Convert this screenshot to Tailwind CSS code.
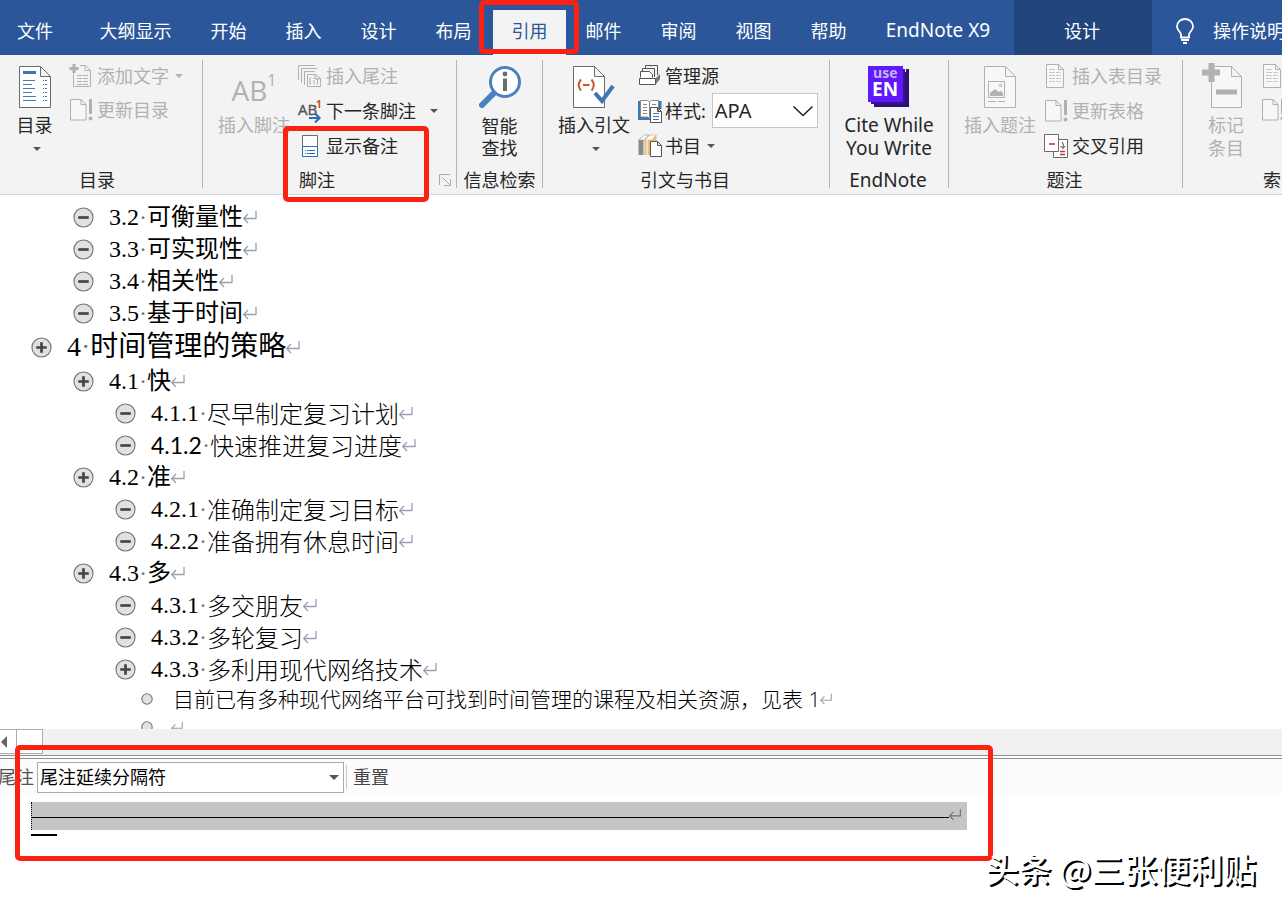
<!DOCTYPE html>
<html lang="zh-CN">
<head>
<meta charset="utf-8">
<title>引用 - 大纲显示</title>
<script src="https://cdn.jsdelivr.net/npm/@tailwindcss/browser@4"></script>
</head>
<body class="relative flex h-screen flex-col overflow-hidden bg-white font-['Noto_Sans','Noto_Sans_CJK_SC',sans-serif] text-lg text-[#262626]">

<svg class="hidden">
  <symbol id="ret" viewBox="0 0 16 14"><path d="M13 1v7.500H1M5 4L.7 8.500L5 13" fill="none" stroke="currentColor" stroke-width="1.300"/></symbol>
  <symbol id="minus" viewBox="0 0 22 22"><circle cx="11" cy="11" r="10" fill="#e1e1e1" stroke="#777" stroke-width="1.200"/><path d="M5.500 11h11" stroke="#444" stroke-width="2.800"/></symbol>
  <symbol id="plus" viewBox="0 0 22 22"><circle cx="11" cy="11" r="10" fill="#e1e1e1" stroke="#777" stroke-width="1.200"/><path d="M5.500 11h11M11 5.500v11" stroke="#444" stroke-width="2.800"/></symbol>
  <symbol id="dot" viewBox="0 0 12 12"><circle cx="6" cy="6" r="5.200" fill="#e1e1e1" stroke="#777" stroke-width="1.100"/></symbol>
  <symbol id="down" viewBox="0 0 8 4"><path d="M0 0h8L4 4z" fill="currentColor"/></symbol>
  <symbol id="update" viewBox="0 0 24 24"><path d="M1.500 1.500h10.500l5 5v15.500H1.500zM12 1.500v5h5" fill="#f7f7f7" stroke="#b1b1b1"/><path d="M21.500 1v15" stroke="#b1b1b1" stroke-width="3"/><circle cx="21.500" cy="20.500" r="2" fill="#b1b1b1"/></symbol>
  <symbol id="listpage" viewBox="0 0 24 24"><path d="M2.500.5h12l5 5v18h-17zM14.500.5v5h5" fill="#f7f7f7" stroke="#b1b1b1"/><path d="M5.500 8.500h5m2 0h4M5.500 11.500h5m2 0h4M5.500 14.500h5m2 0h4M5.500 17.500h5m2 0h4M5.500 5.500h6" stroke="#b1b1b1" stroke-dasharray="2 1"/></symbol>
</svg>

<header class="flex h-[55px] shrink-0 items-end whitespace-nowrap bg-[#2b579a] text-white">
  <nav class="flex h-[45px] shrink-0 items-stretch">
    <button class="mr-[10px] w-[70px] pb-1">文件</button>
    <button class="w-[111px] pb-1">大纲显示</button>
    <button class="w-[75px] pb-1">开始</button>
    <button class="w-[75px] pb-1">插入</button>
    <button class="w-[75px] pb-1">设计</button>
    <button class="w-[75px] pb-1">布局</button>
    <button class="ml-[2px] w-[73px] bg-[#f3f3f3] pb-1 text-[#2b579a]">引用</button>
    <button class="w-[75px] pb-1">邮件</button>
    <button class="w-[75px] pb-1">审阅</button>
    <button class="w-[75px] pb-1">视图</button>
    <button class="w-[75px] pb-1">帮助</button>
    <button class="w-[148px] pb-1 pr-1 text-[19px]">EndNote X9</button>
  </nav>
  <button class="h-full w-[138px] shrink-0 bg-[#22467b] pr-[2px] pt-[6px]">设计</button>
  <button class="flex h-[45px] shrink-0 items-center pb-1 pl-[23px]">
    <svg class="mr-[18px] h-[26px] w-5" viewBox="0 0 20 26" fill="none" stroke="#fff" stroke-width="1.800"><path d="M6 19.500v-3C6 14 2 12.500 2 8.500a8 7.500 0 0 1 16 0c0 4-4 5.500-4 8v3zM6 22h8M8 25h4"/></svg>操作说明搜索
  </button>
</header>

<section class="flex h-[140px] shrink-0 overflow-hidden whitespace-nowrap border-b border-[#d2d2d2] bg-[#f3f3f3] pt-[3px]">
  <!-- 目录 -->
  <div class="flex w-[202px] shrink-0 flex-col">
    <div class="flex h-[110px]">
      <button class="flex w-[69px] flex-col items-center pt-2">
        <svg class="h-[42px] w-8" viewBox="0 0 32 42"><path d="M.5.5h21l10 10v31H.5zM21.500.5v10h10" fill="#fff" stroke="#6b6b6b"/><path d="M4 6.500h13" stroke="#3c78a8" stroke-width="3"/><path d="M4 14.500h12M4 18.500h9M4 22.500h12M4 26.500h9M4 30.500h13M4 34.500h13" stroke="#4a7ab8"/><path d="M24 14.500h4M24 18.500h4M24 22.500h4M24 26.500h4M24 30.500h4M24 34.500h4" stroke="#4a7ab8" stroke-dasharray="1 1 2"/></svg>
        <span class="h-[22px] pt-[6px] leading-[22px]">目录</span>
        <svg class="mt-[17px] ml-1 h-1 w-2 text-[#555]"><use href="#down"/></svg>
      </button>
      <div class="text-[#b1b1b1]">
        <button class="flex h-[35px] items-center" disabled><svg class="mr-1 size-6" viewBox="0 0 24 24"><path d="M4.500 9.500v13h17v-16l-5-5H11M16 1.500v5h5" fill="none" stroke="#b1b1b1"/><path d="M5 0v9M.5 4.500h9" stroke="#b1b1b1" stroke-width="3"/><path d="M8 11.500h5m1 0h5M8 14.500h5m1 0h5M8 17.500h5m1 0h5M8 20.500h5m1 0h5" stroke="#b1b1b1"/></svg>添加文字<svg class="ml-[6px] h-1 w-2"><use href="#down"/></svg></button>
        <button class="flex h-[34px] items-center" disabled><svg class="mr-1 size-6"><use href="#update"/></svg>更新目录</button>
      </div>
    </div>
    <div class="pr-2 text-center leading-6">目录</div>
  </div>
  <div class="mt-[2px] h-[128px] w-px shrink-0 bg-[#b5b5b5]"></div>

  <!-- 脚注 -->
  <div class="flex w-[253px] shrink-0 flex-col">
    <div class="flex h-[110px]">
      <button class="flex w-[95px] flex-col items-center pl-[7px] pt-2 text-[#b1b1b1]" disabled>
        <span class="flex h-[42px] items-start pt-2 font-['Open_Sans'] text-[28px] font-medium leading-8"><span>AB</span><sup class="top-0 text-base leading-3">1</sup></span>
        <span class="h-[22px] pt-[6px] leading-[22px]">插入脚注</span>
      </button>
      <div>
        <button class="flex h-[35px] items-center text-[#b1b1b1]" disabled><svg class="mr-1 size-6" viewBox="0 0 24 24" fill="none" stroke="#b1b1b1"><path d="M.5 16V1.500H17M3.500 19V4.500H19M6.500 21V7.500h10M9.500 22.500v-12h8l5 4v8zM17 10v5h5M13 14h-1v6h1M16 14v1m0 1v4M18.500 14h1v6h-1"/></svg>插入尾注</button>
        <button class="flex h-[35px] items-center"><svg class="mr-1 size-6 overflow-visible" viewBox="0 0 24 24"><text x="0" y="16" font-family="Open Sans" font-size="15" fill="#555" stroke="#555" stroke-width=".4">AB</text><text x="18" y="9" font-family="Open Sans" font-size="10" font-weight="700" fill="#d24726">1</text><path d="M11 19h10M17 14.500l4.500 4.500l-4.500 4.500" fill="none" stroke="#2f6eb5" stroke-width="2.200"/></svg>下一条脚注<svg class="ml-[14px] h-1 w-2 text-[#555]"><use href="#down"/></svg></button>
        <button class="flex h-[35px] items-center"><svg class="mr-1 size-6" viewBox="0 0 24 24"><path d="M4.500 1.500h15v21h-15z" fill="#fff" stroke="#6b6b6b"/><path d="M4.500 12.500h15v10h-15z" fill="#fff" stroke="#2f6eb5"/><path d="M7 16.500h1m1 0h8M7 19.500h1m1 0h8" stroke="#2f6eb5"/></svg>显示备注</button>
      </div>
    </div>
    <div class="flex items-center justify-between pl-24 pr-[5px] leading-6">脚注
      <button aria-label="脚注选项"><svg class="h-3 w-3" viewBox="0 0 12 12" fill="none" stroke="#aaa"><path d="M.5 11V.5H11M3.500 3.500l7 7M11.500 5v6.500H5"/></svg></button></div>
  </div>
  <div class="mt-[2px] h-[128px] w-px shrink-0 bg-[#b5b5b5]"></div>

  <!-- 信息检索 -->
  <div class="flex w-[85px] shrink-0 flex-col">
    <button class="flex h-[110px] flex-col items-center pt-2">
      <svg class="h-[42px] w-[42px]" viewBox="0 0 42 42"><path d="M16 26L3 39" stroke="#4a80bd" stroke-width="6" stroke-linecap="round"/><circle cx="26" cy="16" r="14.500" fill="#fff" stroke="#4a80bd" stroke-width="3"/><circle cx="26" cy="8" r="2.400" fill="#6d6d6d"/><path d="M26 12.500V25" stroke="#6d6d6d" stroke-width="4"/></svg>
      <span class="pt-[7px] leading-[22px]">智能<br>查找</span>
    </button>
    <div class="text-center leading-6">信息检索</div>
  </div>
  <div class="mt-[2px] h-[128px] w-px shrink-0 bg-[#b5b5b5]"></div>

  <!-- 引文与书目 -->
  <div class="flex w-[286px] shrink-0 flex-col">
    <div class="flex h-[110px]">
      <button class="flex w-[95px] flex-col items-center pl-[7px] pt-2">
        <svg class="h-[42px] w-[42px]" viewBox="0 0 42 42"><path d="M.5.5h21l10 10v31H.5zM21.500.5v10h10" fill="#fff" stroke="#6b6b6b"/><path d="M8 13.500q-4.500 5.500 0 11M18.500 13.500q4.500 5.500 0 11M10 19h6.500" fill="none" stroke="#cf5432" stroke-width="2"/><path d="M22 27l7 8L40 20" fill="none" stroke="#3f74b5" stroke-width="4"/></svg>
        <span class="h-[22px] pt-[6px] leading-[22px]">插入引文</span>
        <svg class="mt-[17px] ml-1 h-1 w-2 text-[#555]"><use href="#down"/></svg>
      </button>
      <div>
        <button class="flex h-[35px] items-center"><svg class="mr-[3px] size-6" viewBox="0 0 24 24"><path d="M7.500 5V1.500h12V11M4.500 8V4.500h12V13" fill="none" stroke="#555"/><path d="M2.500 13.500v-6h9l3 3v3" fill="#fff" stroke="#555"/><path d="M1.500 14.500h16v6h-16z" fill="#fff" stroke="#555"/><path d="M18 14l4-4v5l-4 5z" fill="#777"/></svg>管理源</button>
        <div class="flex h-[35px] items-center"><svg class="mr-[3px] size-6" viewBox="0 0 24 24"><path d="M0 2v18h2.500V2z" fill="#3f74b5"/><path d="M0 18h12v3H0z" fill="#3f74b5"/><path d="M20 2h3.500v8H20z" fill="#3f74b5"/><path d="M2.500 1.500h7l2 1.500l2-1.500h7V18h-7l-2 1l-2-1h-7z" fill="#fff" stroke="#888"/><path d="M5 5.500h4M5 8.500h4M5 11.500h4M5 14.500h4M11.500 3v15M14 5.500h4" stroke="#888"/><path d="M12.500 8.500h7l4 4v11h-11zM19.500 8.500v4h4" fill="#fff" stroke="#555"/><path d="M15 14.500h6M15 17.500h6M15 20.500h6" stroke="#3f74b5"/></svg><label for="style">样式:</label>
          <div class="relative ml-[6px]"><select id="style" class="block h-[35px] w-[106px] appearance-none rounded-none border border-[#c6c6c6] bg-white pl-[2px] text-xl"><option>APA</option></select><svg class="pointer-events-none absolute right-1 top-3 h-3 w-[22px]" viewBox="0 0 22 12"><path d="M1.500 1.500l9.500 9l9.500-9" fill="none" stroke="#222" stroke-width="1.600"/></svg></div></div>
        <button class="flex h-[35px] items-center"><svg class="mr-[3px] size-6" viewBox="0 0 24 24"><path d="M.5 6h5v15h-5z" fill="#8a8a8a"/><path d="M6.500 6h7v15h-7z" fill="#e5bd7c"/><path d="M.5 6l6-5H11L5.500 6z" fill="#fff" stroke="#999" stroke-width=".7"/><path d="M6.500 6l6-5h6l-5 5z" fill="#fff" stroke="#d8b070" stroke-width=".7"/><path d="M13.500 6l5-5v6h-5z" fill="#e5bd7c"/><path d="M9 6v15" stroke="#fff"/><path d="M12.500 7.500h7l4 4v11h-11zM19.500 7.500v4h4" fill="#fff" stroke="#555"/></svg>书目<svg class="ml-[6px] h-1 w-2 text-[#555]"><use href="#down"/></svg></button>
      </div>
    </div>
    <div class="pr-[2px] text-center leading-6">引文与书目</div>
  </div>
  <div class="mt-[2px] h-[128px] w-px shrink-0 bg-[#b5b5b5]"></div>

  <!-- EndNote -->
  <div class="flex w-[118px] shrink-0 flex-col text-[19px]">
    <button class="flex h-[110px] flex-col items-center pt-2">
      <svg class="h-[42px] w-[42px]" viewBox="0 0 42 42"><path d="M6 38V6h32v-3h3v38H6z" fill="#2d1272"/><path d="M3 3h34v35H3z" fill="#36138f"/><path d="M0 0h35v36H0z" fill="#6019fa"/><text x="5" y="12" font-family="Open Sans" font-size="14" font-weight="700" fill="#c9b3fb">use</text><text x="4" y="30" font-family="Open Sans" font-size="19" font-weight="700" fill="#fff">EN</text></svg>
      <span class="pt-[6px] leading-[23px]">Cite While<br>You Write</span>
    </button>
    <div class="pr-[2px] text-center leading-6">EndNote</div>
  </div>
  <div class="mt-[2px] h-[128px] w-px shrink-0 bg-[#b5b5b5]"></div>

  <!-- 题注 -->
  <div class="flex w-[233px] shrink-0 flex-col">
    <div class="flex h-[110px]">
      <button class="flex w-[95px] flex-col items-center pl-[7px] pt-2 text-[#b1b1b1]" disabled>
        <svg class="h-[42px] w-8" viewBox="0 0 32 42"><path d="M.5.5h21l10 10v31H.5zM21.500.5v10h10" fill="#f7f7f7" stroke="#b1b1b1"/><path d="M4.500 15.500h16v16h-16z" fill="none" stroke="#b1b1b1"/><path d="M6 30v-3l5-4l4 3l2-1l2 2v3z" fill="#b1b1b1"/><circle cx="16.500" cy="19.500" r="2" fill="#d0d0d0"/><path d="M4 35.500h8m2 0h7" stroke="#b1b1b1"/></svg>
        <span class="h-[22px] pt-[6px] leading-[22px]">插入题注</span>
      </button>
      <div>
        <button class="flex h-[35px] items-center text-[#b1b1b1]" disabled><svg class="mr-1 size-6"><use href="#listpage"/></svg>插入表目录</button>
        <button class="flex h-[35px] items-center text-[#b1b1b1]" disabled><svg class="mr-1 size-6"><use href="#update"/></svg>更新表格</button>
        <button class="flex h-[35px] items-center"><svg class="mr-1 size-6" viewBox="0 0 24 24"><path d="M9.500 5.500h14v18h-14z" fill="#fff" stroke="#6b6b6b"/><path d="M.5.5h14v17H.5z" fill="#fff" stroke="#6b6b6b"/><path d="M5 10h6M16 17.500h5M16 20.500h5" stroke="#b8382f" stroke-width="1.600"/><path d="M18 8q2 1 1 6M16.500 12l2.500 2.500l2.500-2.500" fill="none" stroke="#444"/></svg>交叉引用</button>
      </div>
    </div>
    <div class="pr-[2px] text-center leading-6">题注</div>
  </div>
  <div class="mt-[2px] h-[128px] w-px shrink-0 bg-[#b5b5b5]"></div>

  <!-- 索引 -->
  <div class="flex shrink-0 flex-col">
    <div class="flex h-[110px] text-[#b1b1b1]">
      <button class="flex w-[78px] flex-col items-center pl-2 pt-[5px]" disabled>
        <svg class="mr-2 h-[45px] w-10" viewBox="0 0 40 45"><path d="M9.500 3.500h20l10 10v31h-30zM29.500 3.500v10h10" fill="#f7f7f7" stroke="#b1b1b1"/><path d="M14 29h21" stroke="#b1b1b1" stroke-width="5"/><path d="M9.500 0v19M0 9.500h18" stroke="#b1b1b1" stroke-width="6"/></svg>
        <span class="pt-[6px] leading-[23px]">标记<br>条目</span>
      </button>
      <div>
        <button class="flex h-[35px] items-center" aria-label="插入索引" disabled><svg class="size-6"><use href="#listpage"/></svg></button>
        <button class="flex h-[34px] items-center" aria-label="更新索引" disabled><svg class="size-6"><use href="#update"/></svg></button>
      </div>
    </div>
    <div class="pl-20 leading-6">索引</div>
  </div>
</section>

<main class="min-h-0 flex-1 overflow-hidden whitespace-nowrap pt-[6px] font-['Liberation_Serif','Noto_Sans_CJK_SC',serif] text-2xl text-black">
  <div class="flex h-8 items-center pl-[73px]"><svg class="mr-[15px] size-[21px]"><use href="#minus"/></svg>3.2<span class="text-gray-500">·</span>可衡量性<svg class="h-[14px] w-4 text-gray-400"><use href="#ret"/></svg></div>
  <div class="flex h-8 items-center pl-[73px]"><svg class="mr-[15px] size-[21px]"><use href="#minus"/></svg>3.3<span class="text-gray-500">·</span>可实现性<svg class="h-[14px] w-4 text-gray-400"><use href="#ret"/></svg></div>
  <div class="flex h-8 items-center pl-[73px]"><svg class="mr-[15px] size-[21px]"><use href="#minus"/></svg>3.4<span class="text-gray-500">·</span>相关性<svg class="h-[14px] w-4 text-gray-400"><use href="#ret"/></svg></div>
  <div class="flex h-8 items-center pl-[73px]"><svg class="mr-[15px] size-[21px]"><use href="#minus"/></svg>3.5<span class="text-gray-500">·</span>基于时间<svg class="h-[14px] w-4 text-gray-400"><use href="#ret"/></svg></div>
  <div class="flex h-9 items-center pl-[31px] text-[28px]"><svg class="mr-[15px] size-[21px]"><use href="#plus"/></svg>4<span class="text-gray-500">·</span>时间管理的策略<svg class="h-[14px] w-4 text-gray-400"><use href="#ret"/></svg></div>
  <div class="flex h-8 items-center pl-[73px]"><svg class="mr-[15px] size-[21px]"><use href="#plus"/></svg>4.1<span class="text-gray-500">·</span>快<svg class="h-[14px] w-4 text-gray-400"><use href="#ret"/></svg></div>
  <div class="flex h-8 items-center pl-[115px]"><svg class="mr-[15px] size-[21px]"><use href="#minus"/></svg>4.1.1<span class="text-gray-500">·</span><span class="font-['KaiTi','Noto_Sans_CJK_SC'] font-light">尽早制定复习计划</span><svg class="h-[14px] w-4 text-gray-400"><use href="#ret"/></svg></div>
  <div class="flex h-8 items-center pl-[115px]"><svg class="mr-[15px] size-[21px]"><use href="#minus"/></svg><span class="font-['Lato'] text-[23px]">4.1.2</span><span class="text-gray-500">·</span><span class="font-['KaiTi','Noto_Sans_CJK_SC'] font-light">快速推进复习进度</span><svg class="h-[14px] w-4 text-gray-400"><use href="#ret"/></svg></div>
  <div class="flex h-8 items-center pl-[73px]"><svg class="mr-[15px] size-[21px]"><use href="#plus"/></svg>4.2<span class="text-gray-500">·</span>准<svg class="h-[14px] w-4 text-gray-400"><use href="#ret"/></svg></div>
  <div class="flex h-8 items-center pl-[115px]"><svg class="mr-[15px] size-[21px]"><use href="#minus"/></svg>4.2.1<span class="text-gray-500">·</span><span class="font-['KaiTi','Noto_Sans_CJK_SC'] font-light">准确制定复习目标</span><svg class="h-[14px] w-4 text-gray-400"><use href="#ret"/></svg></div>
  <div class="flex h-8 items-center pl-[115px]"><svg class="mr-[15px] size-[21px]"><use href="#minus"/></svg>4.2.2<span class="text-gray-500">·</span><span class="font-['KaiTi','Noto_Sans_CJK_SC'] font-light">准备拥有休息时间</span><svg class="h-[14px] w-4 text-gray-400"><use href="#ret"/></svg></div>
  <div class="flex h-8 items-center pl-[73px]"><svg class="mr-[15px] size-[21px]"><use href="#plus"/></svg>4.3<span class="text-gray-500">·</span>多<svg class="h-[14px] w-4 text-gray-400"><use href="#ret"/></svg></div>
  <div class="flex h-8 items-center pl-[115px]"><svg class="mr-[15px] size-[21px]"><use href="#minus"/></svg>4.3.1<span class="text-gray-500">·</span><span class="font-['KaiTi','Noto_Sans_CJK_SC'] font-light">多交朋友</span><svg class="h-[14px] w-4 text-gray-400"><use href="#ret"/></svg></div>
  <div class="flex h-8 items-center pl-[115px]"><svg class="mr-[15px] size-[21px]"><use href="#minus"/></svg>4.3.2<span class="text-gray-500">·</span><span class="font-['KaiTi','Noto_Sans_CJK_SC'] font-light">多轮复习</span><svg class="h-[14px] w-4 text-gray-400"><use href="#ret"/></svg></div>
  <div class="flex h-8 items-center pl-[115px]"><svg class="mr-[15px] size-[21px]"><use href="#plus"/></svg>4.3.3<span class="text-gray-500">·</span><span class="font-['KaiTi','Noto_Sans_CJK_SC'] font-light">多利用现代网络技术</span><svg class="h-[14px] w-4 text-gray-400"><use href="#ret"/></svg></div>
  <div class="flex h-7 items-center pl-[141px] font-['Open_Sans','Noto_Sans_CJK_SC',sans-serif] text-[21px] font-light"><svg class="mr-5 size-3"><use href="#dot"/></svg>目前已有多种现代网络平台可找到时间管理的课程及相关资源，见表 1<svg class="h-3 w-[14px] text-gray-400"><use href="#ret"/></svg></div>
  <div class="flex h-7 items-center pl-[141px]"><svg class="mr-[18px] size-3"><use href="#dot"/></svg><svg class="h-3 w-[14px] text-gray-400"><use href="#ret"/></svg></div>
</main>

<!-- 水平滚动条 -->
<div class="flex h-[26px] shrink-0 bg-[#f1f1f1]">
  <button class="flex h-[25px] w-[17px] items-center border-y border-r border-[#ababab] bg-white" aria-label="向左滚动"><svg class="h-3 w-[7px]" viewBox="0 0 7 12"><path d="M7 0v12L1 6z" fill="#666"/></svg></button>
  <div class="h-[25px] w-[26px] border-y border-r border-[#ababab] bg-white"></div>
</div>
<div class="h-1 shrink-0 border-y border-[#8f8f8f] bg-white"></div>

<!-- 尾注窗格 -->
<section class="h-[154px] shrink-0">
  <div class="flex h-9 items-center overflow-hidden bg-[#fcfcfc]">
    <label for="note" class="-ml-[2px] mr-[3px] shrink-0 text-[#555]">尾注</label>
    <div class="relative"><select id="note" class="block h-[31px] w-[307px] appearance-none rounded-none border border-[#ababab] bg-white pl-[2px] text-lg leading-6 text-black"><option>尾注延续分隔符</option></select><svg class="pointer-events-none absolute right-[5px] top-[13px] h-[5px] w-[10px] text-[#555]"><use href="#down"/></svg></div>
    <div class="ml-[2px] h-6 w-px bg-[#c8c8c8]"></div>
    <button class="ml-[6px] text-[#444]">重置</button>
  </div>
  <div class="ml-[31px] mt-[7px] flex h-7 w-[936px] items-center border-l border-dotted border-black bg-[#c5c5c5]">
    <div class="mt-[3px] h-px flex-1 bg-black"></div>
    <svg class="mb-1 mr-1 h-[13px] w-[14px] text-gray-500"><use href="#ret"/></svg>
  </div>
  <div class="ml-[31px] mt-1 h-[2px] w-[26px] bg-black"></div>
</section>

<!-- 标注框与水印 -->
<div class="pointer-events-none absolute left-[479px] top-0 h-[54px] w-[100px] rounded-[5px] border-[5px] border-[#fb2214]"></div>
<div class="pointer-events-none absolute left-[283px] top-[126px] h-[76px] w-[146px] rounded-[5px] border-[5px] border-[#fb2214]"></div>
<div class="pointer-events-none absolute bottom-[52px] left-[15px] h-[116px] w-[978px] rounded-[5px] border-[5px] border-[#fb2214]"></div>
<div class="absolute bottom-[21px] right-[26px] whitespace-nowrap font-['Noto_Sans_CJK_SC',sans-serif] text-[33px] font-medium leading-[48px] text-white [text-shadow:2px_2px_0_#000]">头条 @三张便利贴</div>
</body>
</html>
